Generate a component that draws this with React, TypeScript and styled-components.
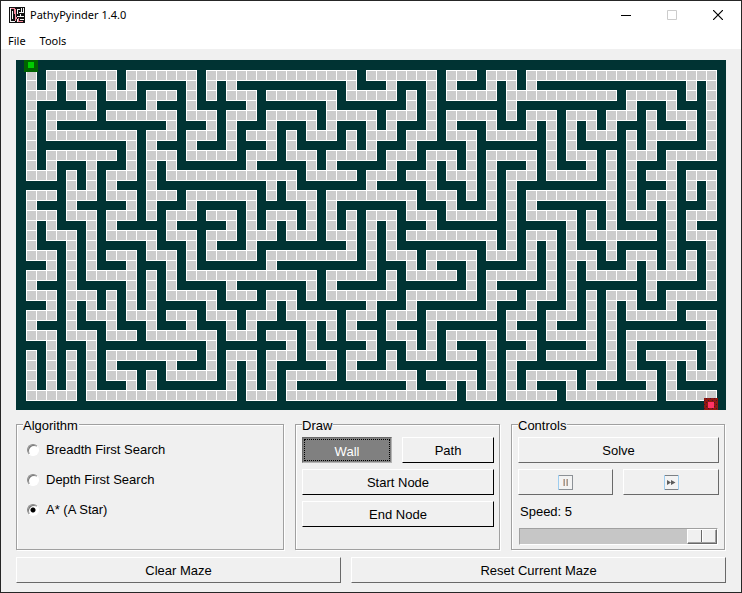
import React, { useState } from "react";
import styled, { createGlobalStyle, css } from "styled-components";

const FACE = "#f0f0f0";
const SHADOW = "#696969";
const GROOVE = "#a0a0a0";

const GlobalStyle = createGlobalStyle`
  * { box-sizing: border-box; }
  body {
    margin: 0;
    background: ${FACE};
    color: #000;
    font: 13px/16px "Liberation Sans", Arial, sans-serif;
  }
  button, input { font: inherit; color: inherit; margin: 0; }
`;

/* Open cells of each maze row, as single columns or column ranges. */
const MAZE_ROWS = [
  "",
  "1 3-9 11-17 19-33 35-41 43-45 47-49 51-69",
  "1 3 5 9 11 17 19 21 33 37 41 43 47 49 51 67 69",
  "1-3 5-7 9-11 13-15 17 19 21-23 25-31 33-37 39 41 43-47 49-59 61-65 67 69",
  "1 7 13 17 23 31 39 41 49 61 65 69",
  "1 3-7 9-15 17-19 21-23 25-29 31-35 37-39 41 43-47 49 51-53 55-57 59-61 63 65-67 69",
  "1 3 15 19 21 25 29 31 35 37 41 43 47 51 53 55 57 59 63 67 69",
  "1 3-11 13-15 17-19 21 23-25 27 29-31 33 35-37 39-41 43-45 47-51 53 55 57-59 61 63-67 69",
  "1 11 13 17 21 25 27 33 35 39 45 53 55 61 63 69",
  "1 3-9 11 13-15 17-21 23-25 27-29 31-35 37-39 41-43 45 47-51 53 55-57 59 61-63 65-69",
  "1 3 7 11 13 15 23 29 31 37 41 43 45 47 51 53 57 59 61 65",
  "1-3 5 7 9-11 13 15-27 29-33 35-37 39-41 43-45 47 49-51 53-57 59 61 63-65 67-69",
  "5 7 9 13 25 27 35 41 45 47 49 59 61 65 67 69",
  "1-3 5-7 9-11 13-15 17-23 25 27-29 31-39 41-43 45 47 49 51-59 61 63-65 67 69",
  "1 5 11 13 17 23 29 31 39 43 47 49 51 59 61 63 65 69",
  "1-3 5-7 9-11 13 15-17 19-21 23 25-27 29 31 33 35-37 39-41 43-47 49 51-55 57 59 61-63 65 67-69",
  "1 3 7 9 15 21 23 25 27 29 31 33 35 37 41 49 55 57 59 65 67",
  "1 3-5 7 9-13 15-17 19-21 23-25 27-29 31-33 35 37 39-47 49 51-53 55 57-63 65 67-69",
  "1 5 7 13 17 19 23 33 35 37 47 49 51 53 55 59 65 69",
  "1-3 5 7 9-11 13-15 17 19-23 25-33 35 37-39 41-45 47-49 51 53 55-57 59 61-63 65 67 69",
  "3 5 7 11 15 17 25 35 39 41 45 51 53 55 57 61 63 65 67 69",
  "1-3 5 7-11 13 15 17-29 31-35 37 39-43 45 47-51 53 55 57-61 63-67 69",
  "1 5 11 13 15 21 29 31 37 45 47 53 55 63 69",
  "1-3 5-7 9 11 13 15-19 21-23 25-27 29 31-37 39-45 47-49 51-53 55 57 59-61 63 65-69",
  "3 5 7 9 11 13 19 25 27 35 39 47 51 55 57 59 61 65",
  "1-3 5 7-9 11-13 15-17 19-21 23-25 27-31 33-35 37-39 41-47 49-51 53-55 57 59 61-65 67-69",
  "1 5 9 13 17 21 23 29 31 33 37 41 49 53 57 59 69",
  "1-3 5-7 9-11 13-19 21-23 25-27 29 31 33-35 37-39 41 43-47 49-51 53-57 59 61-69",
  "3 7 19 27 29 35 39 41 43 47 51 57 59 61 69",
  "1 3 5 7 9-17 19 21-23 25-27 29-31 33-35 37 39-41 43-45 47 49-51 53-57 59 61 63-67 69",
  "1 3 5 7 9 15 19 21 23 25 31 33 37 47 49 59 61 65 67 69",
  "1 3 5 7 9-11 13 15-19 21 23 25 27-31 33-39 41-45 47 49 51-55 57-59 61-63 65 67-69",
  "1 3 5 7 11 13 21 23 25 27 39 43 45 47 49 51 55 57 63 65",
  "1-5 7-21 23-25 27-43 45-47 49-53 55-63 65-69",
  "",
];
const CELL = 10;
const COLUMNS = 71;

function openCells() {
  const cells: Array<[number, number]> = [];
  MAZE_ROWS.forEach((row, y) => {
    row.split(" ").filter(Boolean).forEach((run) => {
      const [first, last = first] = run.split("-").map(Number);
      for (let x = first; x <= last; x++) cells.push([x * CELL, y * CELL]);
    });
  });
  return cells;
}

const CELLS = openCells();
const GRID_PATH = CELLS.map(([x, y]) => `M${x} ${y}h11v11h-11z`).join("");
const FILL_PATH = CELLS.map(([x, y]) => `M${x + 1} ${y + 1}h9v9h-9z`).join("");

const AppWindow = styled.div`
  min-height: 100vh;
  display: flex;
  flex-direction: column;
  border: 1px solid #262626;
  background: ${FACE};
`;

const TitleBar = styled.header`
  display: flex;
  align-items: center;
  height: 28px;
  padding-left: 8px;
  background: #fff;
  font: 11px/16px "Noto Sans", "Open Sans", sans-serif;
`;

const Title = styled.h1`
  flex: 1;
  margin: 0 0 0 5px;
  font: inherit;
`;

const CaptionButton = styled.button`
  display: flex;
  align-items: center;
  justify-content: center;
  width: 46px;
  height: 28px;
  padding: 0;
  border: 0;
  background: transparent;
`;

const MenuBar = styled.nav`
  display: flex;
  gap: 14px;
  height: 20px;
  padding: 3px 7px 0;
  background: #fff;
`;

const MenuButton = styled.button`
  padding: 0;
  border: 0;
  background: transparent;
  && { font: 11px/16px "Noto Sans", "Open Sans", sans-serif; }
`;

const Content = styled.main`
  flex: 1;
  padding: 11px 15px 9px;
`;

const MazeCanvas = styled.svg`
  display: block;
  width: 100%;
  height: auto;
`;

const Groups = styled.div`
  display: grid;
  grid-template-columns: minmax(0, 1fr) 205px 214px;
  gap: 11px;
  margin: 5px 1px 7px 0;
`;

const Group = styled.fieldset`
  min-width: 0;
  margin: 0;
  padding: 2px 5px 4px 6px;
  border: 1px solid ${GROOVE};
  box-shadow: 1px 1px #fff, inset 1px 1px #fff;
`;

const GroupTitle = styled.legend`
  height: 18px;
  padding: 4px 1px 0 0;
  line-height: 14px;
  background: ${FACE};
`;

const ButtonRow = styled.div`
  display: flex;
  gap: 10px;
`;

const Stack = styled.div`
  display: flex;
  flex-direction: column;
  gap: 6px;
  padding-top: 2px;
`;

const PushButton = styled.button<{ $grow?: number; $edge?: string; $pressed?: boolean }>`
  flex: ${(p) => p.$grow ?? 1} 1 0;
  display: flex;
  align-items: center;
  justify-content: center;
  min-width: 0;
  height: 26px;
  min-height: 26px;
  padding: 1px 0 0;
  border: 1px solid;
  border-color: #fff ${(p) => p.$edge ?? SHADOW} ${(p) => p.$edge ?? SHADOW} #fff;
  background: ${FACE};
  ${(p) =>
    p.$pressed &&
    css`
      padding-top: 3px;
      border-color: #696969 #b4b4b4 #b4b4b4 #696969;
      background: #808080;
      color: #fff;
      outline: 1px dotted #000;
      outline-offset: -3px;
    `}
`;

const RadioRow = styled.label`
  display: flex;
  align-items: center;
  gap: 7px;
  height: 30px;
  padding-left: 4px;
`;

const Radio = styled.input`
  appearance: none;
  width: 12px;
  height: 12px;
  border: 1px solid;
  border-color: #8a8a8a #fff #fff #8a8a8a;
  border-radius: 50%;
  background: #fff;
  box-shadow: inset 1px 1px #777;
  &:checked {
    background: radial-gradient(circle at 5px 5px, #000 0 2px, #fff 3px);
  }
`;

const Speed = styled.label`
  display: block;
  padding: 9px 0 8px 2px;
`;

const Slider = styled.input`
  appearance: none;
  display: block;
  width: calc(100% - 2px);
  height: 17px;
  margin-left: 1px;
  border: 1px solid;
  border-color: ${GROOVE} #fff #fff ${GROOVE};
  background: #c6c6c6;
  &::-webkit-slider-thumb {
    appearance: none;
    width: 30px;
    height: 15px;
    border: 1px solid;
    border-color: #fff ${SHADOW} ${SHADOW} #fff;
    background: linear-gradient(90deg, ${FACE} 13px, ${SHADOW} 13px 14px, #fff 14px 15px, ${FACE} 15px);
    box-shadow: inset -1px -1px ${GROOVE};
  }
`;

function AppIcon() {
  return (
    <svg width="16" height="16" viewBox="0 0 16 16" shapeRendering="crispEdges" aria-hidden="true">
      <path fill="#111" d="M0 0h16v16H0z" />
      <path fill="#f4f4f4" d="M1 1h1v14H1zM3 4h1v8H3zM8 2h1v5H8zM8 2h3v1H8zM12 1h1v4h-1zM10 5h5v1h-5zM14 1h1v4h-1zM8 9h7v1H8zM11 7h1v2h-1zM8 12h1v3H8zM11 12h4v1h-4zM2 14h4v1H2z" />
      <path fill="#f58a9c" d="M2 1h4v1H2zM5 2h2v5H5zM6 7h1v5H6zM7 10h1v2H7zM6 12h1v2H6zM9 14h5v1H9zM9 11h1v3H9z" />
    </svg>
  );
}

function PauseIcon() {
  return (
    <svg width="15" height="15" viewBox="0 0 15 15" shapeRendering="crispEdges" aria-hidden="true">
      <path fill="#f3f3f3" stroke="#8c9196" d="M.5.5h14v14H.5z" />
      <path fill="#9dcdf0" d="M0 0h1v15H0z" />
      <path fill="#d9b8a0" d="M5 4h1v7H5zM8 4h1v7H8z" />
      <path fill="#9a9a9a" d="M6 4h1v7H6zM9 4h1v7H9z" />
    </svg>
  );
}

function ForwardIcon() {
  return (
    <svg width="15" height="15" viewBox="0 0 15 15" aria-hidden="true">
      <path fill="#f3f3f3" stroke="#7c8084" d="M.5.5h14v14H.5z" />
      <path fill="#9dcdf0" d="M0 0h1v15H0zM14 0h1v15h-1z" />
      <path fill="#5c5c5c" d="M3 5l4 2.500-4 2.500zM7 5l4.500 2.500L7 10z" />
    </svg>
  );
}

function Maze() {
  return (
    <MazeCanvas
      viewBox={`0 0 ${COLUMNS * CELL} ${MAZE_ROWS.length * CELL}`}
      shapeRendering="crispEdges"
      role="img"
      aria-label="Maze"
    >
      <defs>
        <pattern id="mesh" width="4" height="4" patternUnits="userSpaceOnUse">
          <path fill="#8f1a10" d="M0 0h4v4H0z" />
          <path fill="#4a0a3a" d="M0 0h1v1H0zM2 2h1v1H2z" />
        </pattern>
      </defs>
      <path fill="#003333" d="M0 0h710v350H0z" />
      <path fill="#fff" d={GRID_PATH} />
      <path fill="#ccc" d={FILL_PATH} />
      <path fill="#006400" d="M8 0h14v12H8z" />
      <path fill="#00cc00" d="M12 2h6v6h-6z" />
      <path fill="url(#mesh)" d="M688 338h14v12h-14z" />
      <path fill="#ff3366" d="M692 342h6v6h-6z" />
    </MazeCanvas>
  );
}

const ALGORITHMS = ["Breadth First Search", "Depth First Search", "A* (A Star)"];

export default function App() {
  const [algorithm, setAlgorithm] = useState(ALGORITHMS[2]);
  const [tool, setTool] = useState("Wall");
  const [speed, setSpeed] = useState(5);

  const drawButton = (name: string, grow?: number) => (
    <PushButton
      type="button"
      $grow={grow}
      $edge="#000"
      $pressed={tool === name}
      aria-pressed={tool === name}
      onClick={() => setTool(name)}
    >
      {name}
    </PushButton>
  );

  return (
    <>
      <GlobalStyle />
      <AppWindow>
        <TitleBar>
          <AppIcon />
          <Title>PathyPyinder 1.4.0</Title>
          <CaptionButton type="button" aria-label="Minimize">
            <svg width="10" height="10" viewBox="0 0 10 10" shapeRendering="crispEdges">
              <path d="M0 5h10v1H0z" />
            </svg>
          </CaptionButton>
          <CaptionButton type="button" aria-label="Maximize" disabled>
            <svg width="10" height="10" viewBox="0 0 10 10">
              <path fill="none" stroke="#ccc" d="M.5.5h9v9h-9z" />
            </svg>
          </CaptionButton>
          <CaptionButton type="button" aria-label="Close">
            <svg width="10" height="10" viewBox="0 0 10 10">
              <path fill="none" stroke="#000" strokeWidth="1.200" d="M0 0l10 10M10 0L0 10" />
            </svg>
          </CaptionButton>
        </TitleBar>
        <MenuBar>
          <MenuButton type="button">File</MenuButton>
          <MenuButton type="button">Tools</MenuButton>
        </MenuBar>
        <Content>
          <Maze />
          <Groups>
            <Group>
              <GroupTitle>Algorithm</GroupTitle>
              {ALGORITHMS.map((name) => (
                <RadioRow key={name}>
                  <Radio
                    type="radio"
                    name="algorithm"
                    checked={algorithm === name}
                    onChange={() => setAlgorithm(name)}
                  />
                  {name}
                </RadioRow>
              ))}
            </Group>
            <Group>
              <GroupTitle>Draw</GroupTitle>
              <Stack>
                <ButtonRow>
                  {drawButton("Wall", 90)}
                  {drawButton("Path", 92)}
                </ButtonRow>
                {drawButton("Start Node")}
                {drawButton("End Node")}
              </Stack>
            </Group>
            <Group>
              <GroupTitle>Controls</GroupTitle>
              <Stack>
                <PushButton type="button">Solve</PushButton>
                <ButtonRow>
                  <PushButton type="button" $grow={95} aria-label="Pause">
                    <PauseIcon />
                  </PushButton>
                  <PushButton type="button" $grow={96} aria-label="Fast forward">
                    <ForwardIcon />
                  </PushButton>
                </ButtonRow>
              </Stack>
              <Speed htmlFor="speed">Speed: {speed}</Speed>
              <Slider
                id="speed"
                type="range"
                min={1}
                max={5}
                value={speed}
                onChange={(e) => setSpeed(Number(e.target.value))}
              />
            </Group>
          </Groups>
          <ButtonRow>
            <PushButton type="button" $grow={325}>Clear Maze</PushButton>
            <PushButton type="button" $grow={375}>Reset Current Maze</PushButton>
          </ButtonRow>
        </Content>
      </AppWindow>
    </>
  );
}
